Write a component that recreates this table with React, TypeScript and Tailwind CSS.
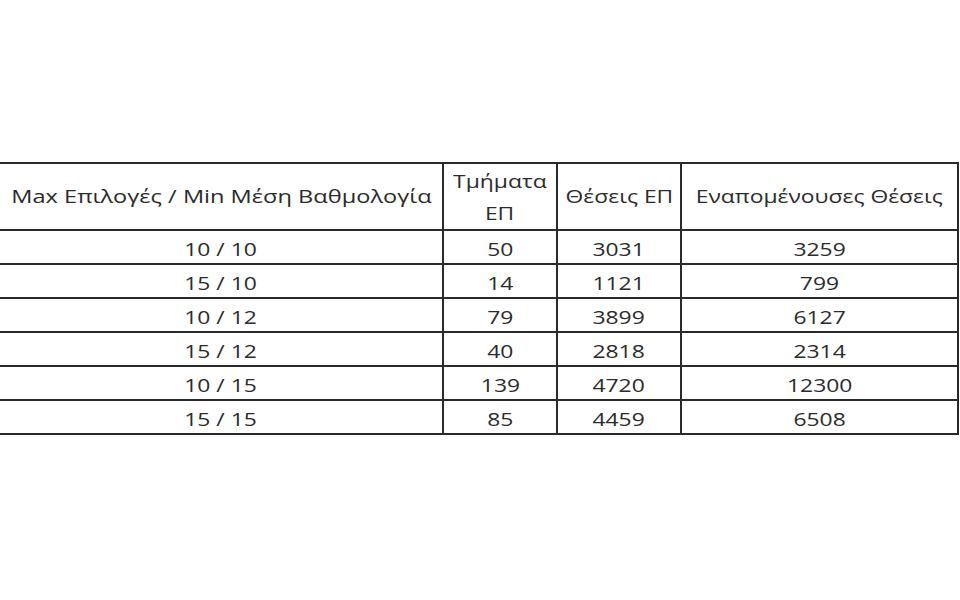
import React from 'react';

const ROWS = [
  ['10 / 10', '50', '3031', '3259'],
  ['15 / 10', '14', '1121', '799'],
  ['10 / 12', '79', '3899', '6127'],
  ['15 / 12', '40', '2818', '2314'],
  ['10 / 15', '139', '4720', '12300'],
  ['15 / 15', '85', '4459', '6508'],
];

// the source picture is stretched sideways, so each label is widened in place
function Wide({ children, wide = false }: { children: React.ReactNode; wide?: boolean }) {
  return <span className={'inline-block ' + (wide ? 'scale-x-[1.31]' : 'scale-x-[1.27]')}>{children}</span>;
}

export default function App() {
  return (
    <div
      className="w-[960px] h-[600px] bg-white pt-[162px] text-[#2b2b2b]"
      style={{ fontFamily: '"Open Sans", "Noto Sans", sans-serif' }}
    >
      <table className="w-[958px] border-collapse table-fixed text-[18px] text-center">
        <colgroup>
          <col className="w-[443px]" />
          <col className="w-[114px]" />
          <col className="w-[124px]" />
          <col className="w-[277px]" />
        </colgroup>
        <thead>
          <tr className="h-[67px]">
            <th className="font-normal border-2 border-l-0 border-[#2a2a2a] p-0">
              <Wide wide>Max Επιλογές / Min Μέση Βαθμολογία</Wide>
            </th>
            <th className="font-normal border-2 border-[#2a2a2a] p-0 leading-[32px]">
              <Wide>Τμήματα</Wide>
              <br />
              <Wide>ΕΠ</Wide>
            </th>
            <th className="font-normal border-2 border-[#2a2a2a] p-0">
              <Wide>Θέσεις ΕΠ</Wide>
            </th>
            <th className="font-normal border-2 border-[#2a2a2a] p-0">
              <Wide>Εναπομένουσες Θέσεις</Wide>
            </th>
          </tr>
        </thead>
        <tbody>
          {ROWS.map((row) => (
            <tr key={row[0]} className="h-[34px]">
              {row.map((cell, i) => (
                <td
                  key={i}
                  className={
                    'border-2 border-[#2a2a2a] leading-none p-0 pt-[4px] ' + (i === 0 ? 'border-l-0' : '')
                  }
                >
                  <Wide>{cell}</Wide>
                </td>
              ))}
            </tr>
          ))}
        </tbody>
      </table>
    </div>
  );
}
